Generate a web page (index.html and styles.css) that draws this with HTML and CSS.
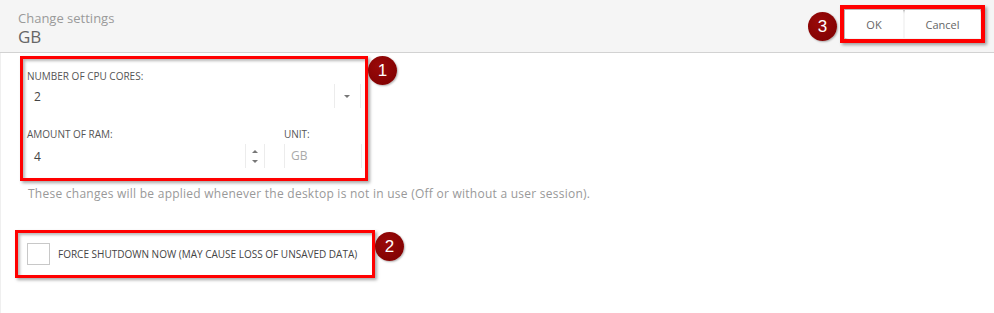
FILE: index.html
```html
<!DOCTYPE html>
<html lang="en">
<head>
  <meta charset="UTF-8">
  <meta name="viewport" content="width=device-width, initial-scale=1.0">
  <title>Change settings</title>
  <link rel="stylesheet" href="styles.css">
</head>
<body>
  <div class="dialog">
    <header class="dialog-head">
      <div class="titles">
        <div class="subtitle">Change settings</div>
        <div class="title">GB</div>
      </div>
      <div class="actions">
        <span class="badge badge-head">3</span>
        <div class="mark mark-actions">
          <button class="btn btn-ok" type="button">OK</button>
          <button class="btn btn-cancel" type="button">Cancel</button>
        </div>
      </div>
    </header>

    <div class="dialog-body">
      <div class="marked">
        <div class="mark mark-fields">
          <label class="field-label">Number of CPU cores:</label>
          <div class="select">
            <span class="select-value">2</span>
            <span class="select-arrow"></span>
          </div>

          <div class="ram-row">
            <div class="ram-col">
              <label class="field-label field-label-2">Amount of RAM:</label>
              <div class="number">
                <span class="number-value">4</span>
                <span class="spinner">
                  <span class="spin-up"></span>
                  <span class="spin-down"></span>
                </span>
              </div>
            </div>
            <div class="unit-col">
              <label class="field-label field-label-2">Unit:</label>
              <div class="unit">GB</div>
            </div>
          </div>
        </div>
        <span class="badge">1</span>
      </div>

      <p class="hint">These changes will be applied whenever the desktop is not in use (Off or without a user session).</p>

      <div class="marked marked-force">
        <div class="mark mark-force">
          <label class="check">
            <span class="check-box"></span>
            Force shutdown now (may cause loss of unsaved data)
          </label>
        </div>
        <span class="badge badge-force">2</span>
      </div>
    </div>
  </div>
</body>
</html>
```

FILE: styles.css
```css
body {
  margin: 0;
  font-family: "Open Sans", Arial, sans-serif;
  background: #fff;
  color: #444;
}
.dialog {
  width: 994px;
  height: 313px;
  overflow: hidden;
}
.dialog-head {
  display: flex;
  justify-content: space-between;
  align-items: flex-start;
  height: 52px;
  padding: 0 9px 0 18px;
  background: #f5f5f5;
  border-bottom: 1px solid #d2d2d2;
}
.titles {
  padding-top: 10px;
}
.subtitle {
  font-size: 13px;
  line-height: 17px;
  color: #9a9a9a;
}
.title {
  font-size: 17px;
  line-height: 19px;
  color: #666;
}
.actions {
  display: flex;
  align-items: flex-start;
  margin-top: 5px;
}
.badge {
  display: flex;
  justify-content: center;
  align-items: center;
  width: 29px;
  height: 29px;
  border-radius: 50%;
  background: radial-gradient(circle at 40% 35%, #9a0a0a, #7c0000);
  color: #fff;
  font-family: "Liberation Sans", Arial, sans-serif;
  font-size: 17px;
  box-shadow: 1px 1px 2px rgba(0,0,0,0.3);
  flex: none;
}
.badge-head {
  margin-top: 7px;
  margin-right: 3px;
}
.mark {
  border: 3px solid #f00;
  box-shadow: 2px 2px 3px rgba(0,0,0,0.35), inset 2px 2px 3px rgba(0,0,0,0.28);
}
.mark-actions {
  display: flex;
  gap: 2px;
  padding: 1px;
  border-width: 4px;
}
.btn {
  height: 28px;
  border: none;
  background: #fff;
  color: #666;
  font-family: "Open Sans", Arial, sans-serif;
  font-size: 11px;
  padding: 0;
  cursor: pointer;
}
.btn-ok {
  width: 58px;
}
.btn-cancel {
  width: 75px;
}

.dialog-body {
  padding-top: 3px;
  border-left: 1px solid #efefef;
  height: 257px;
}
.marked {
  display: flex;
  align-items: flex-start;
  margin-left: 19px;
}
.mark-fields {
  width: 334px;
  padding: 10px 4px 10px 4px;
}
.field-label {
  display: block;
  font-size: 10px;
  line-height: 14px;
  text-transform: uppercase;
  color: #555;
}
.field-label-2 {
  margin-top: 19px;
  margin-bottom: 3px;
}
.select {
  display: flex;
  align-items: center;
  justify-content: space-between;
  height: 24px;
  border-right: 1px solid #ececec;
  margin-top: 1px;
}
.select-value,
.number-value {
  padding-left: 7px;
  font-size: 12px;
  color: #444;
}
.select-arrow {
  width: 25px;
  height: 24px;
  border-left: 1px solid #ececec;
  position: relative;
}
.select-arrow::after {
  content: "";
  position: absolute;
  left: 9px;
  top: 11px;
  border-left: 3px solid transparent;
  border-right: 3px solid transparent;
  border-top: 3px solid #777;
}
.ram-row {
  display: grid;
  grid-template-columns: 238px 78px;
  column-gap: 19px;
}
.number {
  display: flex;
  align-items: center;
  justify-content: space-between;
  height: 24px;
}
.spinner {
  display: flex;
  flex-direction: column;
  justify-content: center;
  align-items: center;
  gap: 7px;
  width: 18px;
  height: 24px;
  border-left: 1px solid #ececec;
  border-right: 1px solid #ececec;
}
.spin-up {
  border-left: 3px solid transparent;
  border-right: 3px solid transparent;
  border-bottom: 3px solid #777;
}
.spin-down {
  border-left: 3px solid transparent;
  border-right: 3px solid transparent;
  border-top: 3px solid #777;
}
.unit {
  height: 24px;
  line-height: 24px;
  padding-left: 6px;
  font-size: 12px;
  color: #aaa;
  border-left: 1px solid #ececec;
  border-right: 1px solid #ececec;
}
.hint {
  margin: 4px 0 0 27px;
  font-size: 12px;
  line-height: 17px;
  letter-spacing: 0.25px;
  color: #999;
}
.marked-force {
  margin-top: 28px;
  margin-left: 14px;
}
.mark-force {
  width: 336px;
  height: 42px;
  padding-left: 9px;
  padding-right: 9px;
  display: flex;
  align-items: center;
}
.check {
  display: flex;
  align-items: center;
  gap: 8px;
  font-size: 10px;
  text-transform: uppercase;
  color: #444;
}
.check-box {
  width: 21px;
  height: 20px;
  border: 1px solid #c8c8c8;
  background: #fff;
}
.badge-force {
  margin-top: 2px;
}
```
